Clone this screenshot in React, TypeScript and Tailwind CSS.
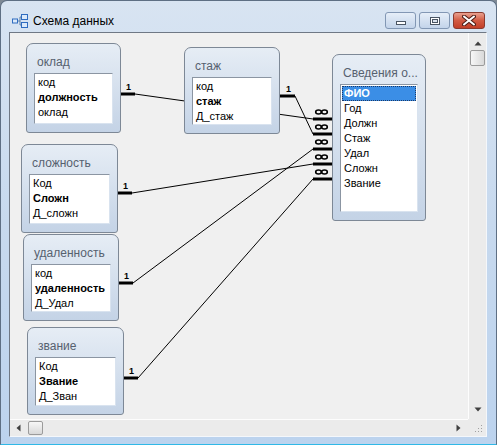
type Row = { text: string; bold?: boolean; selected?: boolean };

type TableBox = {
  title: string;
  rows: Row[];
  pos: string;
};

const tables: TableBox[] = [
  {
    title: "оклад",
    pos: "left-[16px] top-[10px] w-[95px] h-[90px]",
    rows: [{ text: "код" }, { text: "должность", bold: true }, { text: "оклад" }],
  },
  {
    title: "стаж",
    pos: "left-[174px] top-[14px] w-[96px] h-[87px]",
    rows: [{ text: "код" }, { text: "стаж", bold: true }, { text: "Д_стаж" }],
  },
  {
    title: "Сведения о...",
    pos: "left-[322px] top-[21px] w-[94px] h-[167px]",
    rows: [
      { text: "ФИО", bold: true, selected: true },
      { text: "Год" },
      { text: "Должн" },
      { text: "Стаж" },
      { text: "Удал" },
      { text: "Сложн" },
      { text: "Звание" },
    ],
  },
  {
    title: "сложность",
    pos: "left-[11px] top-[111px] w-[97px] h-[89px]",
    rows: [{ text: "Код" }, { text: "Сложн", bold: true }, { text: "Д_сложн" }],
  },
  {
    title: "удаленность",
    pos: "left-[13px] top-[201px] w-[96px] h-[87px]",
    rows: [{ text: "код" }, { text: "удаленность", bold: true }, { text: "Д_Удал" }],
  },
  {
    title: "звание",
    pos: "left-[17px] top-[294px] w-[97px] h-[88px]",
    rows: [{ text: "Код" }, { text: "Звание", bold: true }, { text: "Д_Зван" }],
  },
];

// one side: bar x1..x2 at y, line from x2 to the many end
const links = [
  { x1: 110, x2: 125, y: 61, to: 86 },
  { x1: 270, x2: 285, y: 63, to: 101 },
  { x1: 108, x2: 123, y: 250, to: 116 },
  { x1: 107, x2: 122, y: 160, to: 131 },
  { x1: 113, x2: 128, y: 345, to: 146 },
];

function Table({ t }: { t: TableBox }) {
  return (
    <div
      className={`absolute ${t.pos} flex flex-col rounded-t-[7px] rounded-b-[3px] border border-[#7d8896] bg-gradient-to-b from-[#e6edf5] to-[#c4d3e6] pl-[7px] pr-[7px] pb-[8px]`}
    >
      <div className="h-[29px] pl-[3px] pt-[10px] text-[12px] leading-[16px] text-[#56616f] whitespace-nowrap">
        {t.title}
      </div>
      <div className="flex-1 overflow-hidden border border-[#8b95a2] border-r-[#d9e3ef] border-b-[#d9e3ef] bg-white pt-[1px] pl-[1px] pr-[1px]">
        {t.rows.map((r, i) => (
          <div
            key={i}
            className={
              r.selected
                ? "h-[15px] leading-[13px] pl-[1px] border border-dotted border-[#1d3a66] bg-[#3b8ee6] text-white font-bold text-[11px]"
                : `h-[15px] leading-[15px] pl-[2px] text-[11px] text-black whitespace-nowrap ${r.bold ? "font-bold" : ""}`
            }
          >
            {r.text}
          </div>
        ))}
      </div>
    </div>
  );
}

function Links() {
  return (
    <svg className="absolute left-0 top-0" width="459" height="386">
      {links.map((l, i) => (
        <g key={i}>
          <line x1={l.x2} y1={l.y} x2={303} y2={l.to} stroke="#000" strokeWidth="1" />
          <rect x={l.x1} y={l.y - 1.5} width={l.x2 - l.x1} height="3" fill="#000" />
          <text
            x={l.x1 + 6}
            y={l.y - 4}
            fontSize="9"
            fontWeight="bold"
            fontFamily="Liberation Sans, Arial, sans-serif"
          >
            1
          </text>
          <rect x="303" y={l.to - 1.5} width="19" height="3" fill="#000" />
          <ellipse cx="308.5" cy={l.to - 7} rx="2.8" ry="2" fill="none" stroke="#000" strokeWidth="1.6" />
          <ellipse cx="314.5" cy={l.to - 7} rx="2.8" ry="2" fill="none" stroke="#000" strokeWidth="1.6" />
        </g>
      ))}
    </svg>
  );
}

function TitleIcon() {
  return (
    <svg width="16" height="16" viewBox="0 0 16 16">
      <path d="M5 8h3M8 4v8M8 4h2M8 12h2" stroke="#5b7fa8" strokeWidth="1" fill="none" />
      <rect x="0.5" y="6" width="5" height="4" fill="#dbe9fa" stroke="#2f6cc0" />
      <rect x="9.5" y="1.5" width="6" height="5" fill="#dbe9fa" stroke="#2f6cc0" />
      <rect x="9.5" y="9.5" width="6" height="5" fill="#dbe9fa" stroke="#2f6cc0" />
    </svg>
  );
}

export default function App() {
  return (
    <div className="w-[497px] h-[445px] bg-[#7f8a96] font-['Liberation_Sans',Arial,sans-serif]">
      <div className="w-[497px] h-[445px] flex flex-col rounded-t-[7px] border border-[#5e6f84] border-b-[#2fb8e6] bg-gradient-to-b from-[#d8e4f2] via-[#c7d9ee] to-[#bcd3ee]">
        {/* Title bar */}
        <div className="h-[31px] flex items-start pl-[11px] pr-[11px]">
          <div className="mt-[12px] flex items-center gap-[5px]">
            <TitleIcon />
            <span className="text-[12px] leading-[16px] text-black">Схема данных</span>
          </div>
          <div className="ml-auto mt-[11px] flex gap-[3px]">
            <div className="w-[31px] h-[17px] rounded-[3px] border border-[#8297b4] bg-gradient-to-b from-[#e6eef8] to-[#c3d4ea] flex items-end justify-center pb-[3px]">
              <div className="w-[10px] h-[4px] border border-[#4a5563] bg-white" />
            </div>
            <div className="w-[31px] h-[17px] rounded-[3px] border border-[#8297b4] bg-gradient-to-b from-[#e6eef8] to-[#c3d4ea] flex items-center justify-center">
              <div className="w-[10px] h-[8px] border border-[#4a5563] bg-white flex items-center justify-center">
                <div className="w-[6px] h-[4px] border border-[#4a5563] bg-[#dbe3ee]" />
              </div>
            </div>
            <div className="w-[32px] h-[17px] rounded-[3px] border border-[#8a3a2e] bg-gradient-to-b from-[#e9a08f] via-[#d25b43] to-[#c23f28] flex items-center justify-center">
              <svg width="14" height="11" viewBox="0 0 14 11">
                <path d="M2 1.5l10 8M12 1.5l-10 8" stroke="#4d1e17" strokeWidth="4" strokeLinecap="round" />
                <path d="M2 1.5l10 8M12 1.5l-10 8" stroke="#fff" strokeWidth="2" strokeLinecap="round" />
              </svg>
            </div>
          </div>
        </div>

        {/* Client area */}
        <div className="ml-[8px] mr-[9px] h-[405px] border border-[#6f7885] border-r-[#f4f7fb] border-b-[#f4f7fb] grid grid-cols-[1fr_18px] grid-rows-[1fr_17px]">
          <div className="relative overflow-hidden bg-[#f0f0f0]">
            <Links />
            {tables.map((t) => (
              <Table key={t.title} t={t} />
            ))}
          </div>

          {/* vertical scrollbar */}
          <div className="bg-[#ebebeb] border-l border-[#fdfdfd] flex flex-col items-center pt-[8px]">
            <svg width="8" height="5" viewBox="0 0 8 5">
              <path d="M0.5 4.5L4 0.5L7.5 4.5Z" fill="#404040" />
            </svg>
            <div className="mt-[4px] w-[15px] h-[16px] rounded-[2px] border border-[#9b9b9b] bg-gradient-to-r from-[#f7f7f7] to-[#d9d9d9]" />
            <div className="flex-1" />
            <svg width="8" height="5" viewBox="0 0 8 5" className="mb-[7px]">
              <path d="M0.5 0.5L4 4.5L7.5 0.5Z" fill="#404040" />
            </svg>
          </div>

          {/* horizontal scrollbar */}
          <div className="bg-[#ebebeb] border-t border-[#fdfdfd] flex items-center pl-[6px] pr-[7px]">
            <svg width="5" height="8" viewBox="0 0 5 8">
              <path d="M4.5 0.5L0.5 4L4.5 7.5Z" fill="#404040" />
            </svg>
            <div className="ml-[7px] w-[15px] h-[14px] rounded-[2px] border border-[#9b9b9b] bg-gradient-to-b from-[#f7f7f7] to-[#d9d9d9]" />
            <div className="flex-1" />
            <svg width="5" height="8" viewBox="0 0 5 8">
              <path d="M0.5 0.5L4.5 4L0.5 7.5Z" fill="#404040" />
            </svg>
          </div>
          <div className="bg-[#ebebeb] flex items-end justify-end p-[3px]">
            <svg width="10" height="10" viewBox="0 0 10 10">
              {[
                [8, 2],
                [5, 5],
                [8, 5],
                [2, 8],
                [5, 8],
                [8, 8],
              ].map(([x, y], i) => (
                <rect key={i} x={x} y={y} width="1" height="1" fill="#a0a0a0" />
              ))}
            </svg>
          </div>
        </div>
      </div>
    </div>
  );
}
